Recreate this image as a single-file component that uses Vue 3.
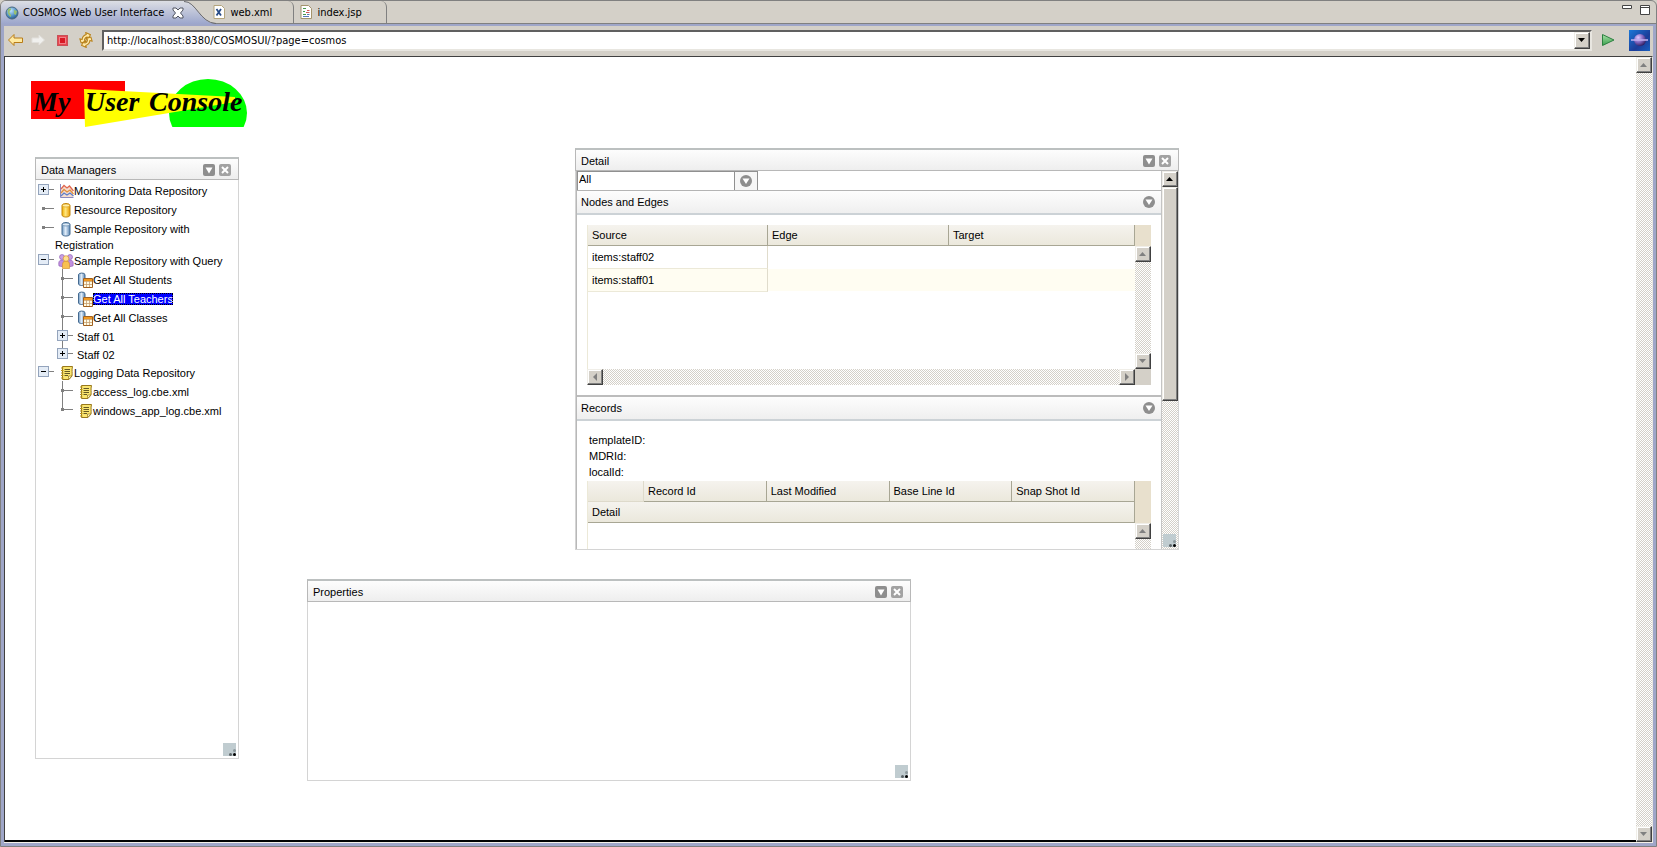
<script setup>
import { ref } from 'vue'

const url = ref('http://localhost:8380/COSMOSUI/?page=cosmos')
const filter = ref('All')
const selected = ref('Get All Teachers')

const tree = [
  { label: 'Monitoring Data Repository', icon: 'chart', state: 'plus' },
  { label: 'Resource Repository', icon: 'cyl-gold' },
  { label: 'Sample Repository with Registration', icon: 'cyl-blue' },
  {
    label: 'Sample Repository with Query',
    icon: 'people',
    state: 'minus',
    children: [
      { label: 'Get All Students', icon: 'query' },
      { label: 'Get All Teachers', icon: 'query' },
      { label: 'Get All Classes', icon: 'query' },
      { label: 'Staff 01', state: 'plus' },
      { label: 'Staff 02', state: 'plus' },
    ],
  },
  {
    label: 'Logging Data Repository',
    icon: 'log',
    state: 'minus',
    children: [
      { label: 'access_log.cbe.xml', icon: 'log' },
      { label: 'windows_app_log.cbe.xml', icon: 'log' },
    ],
  },
]
const edges = ['items:staff02', 'items:staff01']
</script>

<template>
  <div class="frame">
    <svg class="defs" aria-hidden="true">
      <defs>
        <linearGradient id="gold" x1="0" x2="1"><stop offset="0" stop-color="#f0b000" /><stop offset=".45" stop-color="#ffe680" /><stop offset="1" stop-color="#e89c00" /></linearGradient>
        <linearGradient id="steel" x1="0" x2="1"><stop offset="0" stop-color="#6f98c0" /><stop offset=".45" stop-color="#e2eefa" /><stop offset="1" stop-color="#5a86b4" /></linearGradient>
        <linearGradient id="tabfill" x1="0" y1="0" x2="0" y2="1"><stop offset="0" stop-color="#dcdee4" /><stop offset="1" stop-color="#9ca6cc" /></linearGradient>
        <linearGradient id="go" x1="0" y1="0" x2="0" y2="1"><stop offset="0" stop-color="#a8e0a8" /><stop offset="1" stop-color="#3aa04c" /></linearGradient>
        <linearGradient id="sky" x1="0" y1="0" x2="1" y2="1"><stop offset="0" stop-color="#1c78d8" /><stop offset=".6" stop-color="#1c3c98" /><stop offset="1" stop-color="#1860c0" /></linearGradient>
        <radialGradient id="orb" cx=".35" cy=".3" r=".8"><stop offset="0" stop-color="#e0c8ff" /><stop offset=".5" stop-color="#8066c0" /><stop offset="1" stop-color="#20104c" /></radialGradient>
        <radialGradient id="world" cx=".4" cy=".3" r=".8"><stop offset="0" stop-color="#bfe4ff" /><stop offset=".6" stop-color="#4c8cc0" /><stop offset="1" stop-color="#204878" /></radialGradient>
      </defs>
      <symbol id="chart" viewBox="0 0 16 16">
        <path d="M2.500 1V14.500H15.500" fill="none" stroke="#8a8ac0" />
        <path d="M3 6 6 3 9 5 11 3 15 8V14H3z" fill="#f4dcd0" />
        <path d="M3 6 6 2.500 9 5 11.500 3 15.500 8" fill="none" stroke="#e06850" stroke-width="1.300" />
        <path d="M3 10 6 6.500 9 9 12 7 15.500 11" fill="none" stroke="#e09040" stroke-width="1.300" />
        <path d="M3 13 6 10 9 12 12 10 15.500 13" fill="none" stroke="#6080c8" stroke-width="1.300" />
      </symbol>
      <symbol id="cyl-gold" viewBox="0 0 16 16"><path d="M4 3.500C4 .8 12 .8 12 3.500V13C12 15.700 4 15.700 4 13z" fill="url(#gold)" stroke="#c08410" /><ellipse cx="8" cy="3.500" rx="3.500" ry="1.500" fill="#fff0a8" stroke="#d89c20" stroke-width=".7" /></symbol>
      <symbol id="cyl-blue" viewBox="0 0 16 16"><path d="M4 3.500C4 .8 12 .8 12 3.500V13C12 15.700 4 15.700 4 13z" fill="url(#steel)" stroke="#446a90" /><ellipse cx="8" cy="3.500" rx="3.500" ry="1.500" fill="#dceaf6" stroke="#5a80a4" stroke-width=".7" /></symbol>
      <symbol id="people" viewBox="0 0 16 16">
        <path d="M1 13C0 8 2 7 4 7S7 9 6 14zM15 13C16 8 14 7 12 7S9 9 10 14z" fill="#c090e0" stroke="#8c58b0" stroke-width=".6" />
        <circle cx="4" cy="4" r="2.500" fill="#c8a0e4" stroke="#8c58b0" stroke-width=".6" /><circle cx="12" cy="4" r="2.500" fill="#c8a0e4" stroke="#8c58b0" stroke-width=".6" />
        <path d="M4.500 15.500C4 9 5.500 8 8 8S12 9 11.500 15.500z" fill="#f8c050" stroke="#d08820" stroke-width=".6" /><circle cx="8" cy="5.500" r="2.800" fill="#ffe090" stroke="#d08820" stroke-width=".6" />
      </symbol>
      <symbol id="query" viewBox="0 0 16 16">
        <path d="M1.500 2.500C2 .6 7.500 .6 8 2.500V12C7 14 2 14 1.500 12z" fill="url(#steel)" stroke="#446a90" />
        <path d="M6.500 6.500H15.500V15.500H6.500z" fill="#fffbe4" stroke="#a06020" /><path d="M7 7H15V9H7z" fill="#f09820" />
        <path d="M7 9.500H15M7 12.500H15M9.500 9V15M12.500 9V15" stroke="#c8a070" stroke-width=".8" />
      </symbol>
      <symbol id="log" viewBox="0 0 16 16">
        <path d="M4.500 1.500H14.500C13.500 5 14.500 8 14 11L11 14.500H4.500z" fill="#fbe670" stroke="#98781c" />
        <path d="M6.500 4.500H12M6.500 6.500H12M6.500 8.500H12M6.500 10.500H10" stroke="#54481c" stroke-width=".9" />
        <path d="M3 3H5.500M3 5.500H5.500M3 8H5.500M3 10.500H5.500M3 13H5.500" stroke="#b8941c" stroke-width="1.200" /><path d="M10.500 14.500V11H14z" fill="#fff7bc" stroke="#98781c" stroke-width=".7" />
      </symbol>
      <symbol id="menu" viewBox="0 0 12 12"><rect width="12" height="12" rx="2" fill="#8e8e8e" /><path d="M2.500 3.500H9.500L6 9.500z" fill="#fff" /></symbol>
      <symbol id="close" viewBox="0 0 12 12"><rect width="12" height="12" rx="2" fill="#a2a2a2" /><path d="M3 3 9 9M9 3 3 9" stroke="#fff" stroke-width="2" /></symbol>
      <symbol id="round" viewBox="0 0 12 12"><circle cx="6" cy="6" r="6" fill="#8e8e8e" /><path d="M2.500 3.500H9.500L6 9z" fill="#fff" /></symbol>
      <symbol id="up" viewBox="0 0 8 8"><path d="M0 6H7L3.500 2z" fill="currentColor" /></symbol>
      <symbol id="down" viewBox="0 0 8 8"><path d="M0 2H7L3.500 6z" fill="currentColor" /></symbol>
      <symbol id="left" viewBox="0 0 8 8"><path d="M6 0V8L2 4z" fill="currentColor" /></symbol>
      <symbol id="right" viewBox="0 0 8 8"><path d="M2 0V8L6 4z" fill="currentColor" /></symbol>
      <symbol id="grip" viewBox="0 0 13 13"><rect width="13" height="13" fill="#c0ccd0" /><circle cx="11.500" cy="7.500" r="1.500" fill="#8c989c" /><circle cx="7.500" cy="11.500" r="1.500" fill="#5c6468" /><circle cx="11.500" cy="11.500" r="1.500" fill="#000" /></symbol>
    </svg>

    <header class="tabs">
      <button class="tab active">
        <svg class="i14" viewBox="0 0 14 14"><circle cx="7" cy="7" r="6" fill="url(#world)" stroke="#486880" /><path d="M3 3C6 1 7 3 5 5S7 8 6 11C4 10 2 7 3 3zM9 4 12 5 11 9 9 8z" fill="#98c070" /></svg>
        <span>COSMOS Web User Interface</span>
        <svg class="i12" viewBox="0 0 12 12"><path d="M1 1H4L6 3 8 1H11V3L8.500 6 11 9V11H8L6 9 4 11H1V9L3.500 6 1 3z" fill="#fff" stroke="#505460" /></svg>
      </button>
      <svg class="curve" viewBox="0 0 32 23"><path d="M0 0C12 0 16 22 32 23H0z" fill="url(#tabfill)" /><path d="M0 .5C12 0 16 22 32 22.500" fill="none" stroke="#68686c" /></svg>
      <button class="tab second">
        <svg class="i14" viewBox="0 0 14 14"><path d="M2 .5H9.500L12.500 3.500V13.500H2z" fill="#fff" stroke="#b4a47c" /><path d="M4.500 4 9 10.500M9 4 4.500 10.500" stroke="#284c88" stroke-width="1.800" /></svg>
        <span>web.xml</span>
      </button>
      <button class="tab third">
        <svg class="i14" viewBox="0 0 14 14"><path d="M2 .5H9.500L12.500 3.500V13.500H2z" fill="#fff" stroke="#a4946c" /><path d="M4 3.500H7M4 6.500H6M4 9.500H7" stroke="#48984c" /><path d="M8 5.500H10.500M7 7.500H10.500" stroke="#d05858" /><path d="M8 9.500H10.500M4 11.500H10" stroke="#5878b8" /></svg>
        <span>index.jsp</span>
      </button>
      <div class="winbuttons">
        <button aria-label="Minimize"><svg width="10" height="12"><path d="M.5 2.500H9.500V5.500H.5z" fill="#fff" stroke="#444" /></svg></button>
        <button aria-label="Maximize"><svg width="10" height="12"><path d="M.5 2.500H9.500V11.500H.5zM.5 4.500H9.500" fill="#fff" stroke="#444" /></svg></button>
      </div>
    </header>

    <div class="view">
      <nav class="toolbar">
        <button aria-label="Back"><svg class="i16" viewBox="0 0 16 16"><path d="M1.500 8 7 2.500V6H15.500V10.500H7V13.500z" fill="#ffe9a0" stroke="#b87c18" stroke-linejoin="round" /></svg></button>
        <button aria-label="Forward" disabled><svg class="i16" viewBox="0 0 16 16"><path d="M14.500 8 9 3V6H2V10.500H9V13z" fill="#f0f0ee" stroke="#e2e0dc" /></svg></button>
        <button aria-label="Stop"><svg class="i16" viewBox="0 0 16 16"><rect x="3.500" y="3.500" width="10" height="10" fill="#e84850" stroke="#c85058" /><rect x="5.500" y="5.500" width="6" height="6" fill="#d81824" stroke="#f08088" /></svg></button>
        <button aria-label="Refresh"><svg class="i16" viewBox="0 0 16 16"><path d="M1.500 9.500V5L3.500 6.500C4.500 4 6.500 3 9 3V1L13 4.500 9 7.500V5.500C7 5.500 6 6.500 5.500 8L7 9.500z" fill="#ffe9a8" stroke="#b88018" stroke-linejoin="round" transform="rotate(-18 7 5)" /><path d="M14.500 6.500V11L12.500 9.500C11.500 12 9.500 13 7 13V15L3 11.500 7 8.500V10.500C9 10.500 10 9.500 10.500 8L9 6.500z" fill="#ffe9a8" stroke="#b88018" stroke-linejoin="round" transform="rotate(-18 9 11)" /></svg></button>
        <div class="address">
          <input v-model="url" aria-label="Address" />
          <button class="bevel" aria-label="Show history"><svg class="i8 dark"><use href="#down" /></svg></button>
        </div>
        <button class="go" aria-label="Go"><svg class="i16" viewBox="0 0 16 16"><path d="M2.500 2.500 14 8 2.500 13.500z" fill="url(#go)" stroke="#2c8040" /></svg></button>
        <svg class="brand" viewBox="0 0 21 21"><rect width="21" height="21" fill="url(#sky)" /><circle cx="11" cy="10" r="6" fill="url(#orb)" /><path d="M2 10H19" stroke="#c0b0f0" stroke-width="1.500" /></svg>
      </nav>

      <main class="page">
        <div class="canvas">
          <svg class="logo" viewBox="0 0 218 49" role="img" aria-label="My User Console">
            <rect x="0" y="3" width="94" height="38" fill="#f00" />
            <ellipse cx="177" cy="35" rx="39" ry="34" fill="#0f0" />
            <path d="M53 11 204 19 204 24 54 49z" fill="#ff0" />
            <text x="2" y="33">My</text><text x="54" y="33">User</text><text x="118" y="33">Console</text>
          </svg>

          <section class="window managers">
            <header class="title"><h2>Data Managers</h2>
              <button aria-label="Menu"><svg class="i12"><use href="#menu" /></svg></button>
              <button aria-label="Close"><svg class="i12"><use href="#close" /></svg></button>
            </header>
            <ul class="tree">
              <li v-for="n in tree" :key="n.label">
                <div class="node">
                  <button v-if="n.state" class="expander" :class="n.state" :aria-label="'Toggle ' + n.label"></button>
                  <i v-else class="leaf"></i>
                  <div class="label"><svg class="i16 pic"><use :href="'#' + n.icon" /></svg><span>{{ n.label }}</span></div>
                </div>
                <ul v-if="n.children">
                  <li v-for="c in n.children" :key="c.label" class="child">
                    <div class="node" :class="{ plain: !c.icon }">
                      <button v-if="c.state" class="expander" :class="c.state" :aria-label="'Toggle ' + c.label"></button>
                      <i v-else class="leaf"></i>
                      <div class="label"><svg v-if="c.icon" class="i16 pic"><use :href="'#' + c.icon" /></svg><span :class="{ selected: c.label === selected }" @click="selected = c.label">{{ c.label }}</span></div>
                    </div>
                  </li>
                </ul>
              </li>
            </ul>
            <svg class="grip"><use href="#grip" /></svg>
          </section>

          <section class="window detail">
            <header class="title"><h2>Detail</h2>
              <button aria-label="Menu"><svg class="i12"><use href="#menu" /></svg></button>
              <button aria-label="Close"><svg class="i12"><use href="#close" /></svg></button>
            </header>
            <div class="scroller">
              <div class="content">
                <div class="combo">
                  <input v-model="filter" aria-label="Filter" />
                  <button aria-label="Open filter list"><svg class="i12"><use href="#round" /></svg></button>
                </div>
                <header class="section"><h3>Nodes and Edges</h3><button aria-label="Collapse"><svg class="i12"><use href="#round" /></svg></button></header>
                <div class="panel">
                  <div class="grid edges">
                    <table>
                      <colgroup><col class="c180" /><col class="c181" /><col /></colgroup>
                      <thead><tr><th>Source</th><th>Edge</th><th>Target</th></tr></thead>
                      <tbody><tr v-for="e in edges" :key="e"><td>{{ e }}</td><td></td><td></td></tr></tbody>
                    </table>
                    <div class="side">
                      <div class="corner"></div>
                      <div class="vbar"><button class="bevel" aria-label="Scroll up"><svg class="i8"><use href="#up" /></svg></button><button class="bevel" aria-label="Scroll down"><svg class="i8"><use href="#down" /></svg></button></div>
                    </div>
                  </div>
                  <div class="hrow">
                    <div class="hbar"><button class="bevel" aria-label="Scroll left"><svg class="i8"><use href="#left" /></svg></button><button class="bevel" aria-label="Scroll right"><svg class="i8"><use href="#right" /></svg></button></div>
                    <div class="square"></div>
                  </div>
                </div>
                <header class="section heavy"><h3>Records</h3><button aria-label="Collapse"><svg class="i12"><use href="#round" /></svg></button></header>
                <div class="panel">
                  <dl class="facts"><dt>templateID:</dt><dt>MDRId:</dt><dt>localId:</dt></dl>
                  <div class="grid records">
                    <table>
                      <colgroup><col class="c56" /><col /><col /><col /><col /></colgroup>
                      <thead>
                        <tr><th class="blank"></th><th>Record Id</th><th>Last Modified</th><th>Base Line Id</th><th>Snap Shot Id</th></tr>
                        <tr><th colspan="5">Detail</th></tr>
                      </thead>
                    </table>
                    <div class="side">
                      <div class="corner tall"></div>
                      <div class="vbar"><button class="bevel" aria-label="Scroll up"><svg class="i8"><use href="#up" /></svg></button></div>
                    </div>
                  </div>
                </div>
              </div>
              <div class="vbar outer"><button class="bevel" aria-label="Scroll up"><svg class="i8 dark"><use href="#up" /></svg></button><div class="bevel thumb"></div></div>
            </div>
            <svg class="grip"><use href="#grip" /></svg>
          </section>

          <section class="window properties">
            <header class="title"><h2>Properties</h2>
              <button aria-label="Menu"><svg class="i12"><use href="#menu" /></svg></button>
              <button aria-label="Close"><svg class="i12"><use href="#close" /></svg></button>
            </header>
            <svg class="grip"><use href="#grip" /></svg>
          </section>
        </div>
        <div class="vbar"><button class="bevel" aria-label="Scroll up"><svg class="i8"><use href="#up" /></svg></button><button class="bevel" aria-label="Scroll down"><svg class="i8"><use href="#down" /></svg></button></div>
      </main>
    </div>
  </div>
</template>

<style>
body { background: #d4d0c8; }
</style>

<style scoped>
* { box-sizing: border-box; }
.frame { display: flex; flex-direction: column; min-height: 100vh; background: #d4d0c8; color: #000; font: 11px/15px "DejaVu Sans Condensed", "Noto Sans", sans-serif; border: 1px solid #808080; border-radius: 6px 6px 0 0; overflow: hidden; }
.defs { position: absolute; width: 0; height: 0; }
button { border: 0; padding: 0; margin: 0; background: none; font: inherit; color: inherit; display: flex; align-items: center; justify-content: center; }
input { border: 0; padding: 0; margin: 0; font: inherit; color: inherit; min-width: 0; background: none; outline: 0; }
ul, dl, dt, h2, h3 { margin: 0; padding: 0; list-style: none; font: inherit; }
svg { flex: none; display: block; }
.i8 { width: 8px; height: 8px; color: #808080; }
.i8.dark { color: #000; }
.i12 { width: 12px; height: 12px; }
.i14 { width: 14px; height: 14px; }
.i16 { width: 16px; height: 16px; }

.tabs { display: flex; height: 23px; border-bottom: 1px solid #808080; }
.tab { height: 22px; white-space: nowrap; justify-content: flex-start; }
.active { height: 23px; padding-left: 4px; gap: 4px; background: linear-gradient(#dcdee4, #9ca6cc); }
.active .i12 { margin-left: 4px; }
.curve { width: 32px; height: 23px; margin-right: -4px; }
.second, .third { gap: 4px; border-right: 1px solid #808080; border-top-right-radius: 6px; }
.second { width: 82px; }
.third { width: 93px; padding-left: 5px; }
.winbuttons { margin-left: auto; display: flex; gap: 8px; padding: 2px 6px 0 0; align-items: flex-start; }

.view { flex: 1; display: flex; flex-direction: column; padding: 2px 3px 4px; background: #9fa6c8; }
.toolbar { display: flex; align-items: center; height: 30px; padding: 0 3px 2px 3px; gap: 8px; background: #d4d0c8; }
.toolbar > button:first-child { margin-right: -1px; }
.address { flex: 1; display: flex; height: 21px; background: #fff; border: 2px solid; border-color: #606060 #e8e6e0 #e8e6e0 #606060; }
.address input { flex: 1; padding-left: 3px; }
.address .bevel { height: 17px; }
.go { margin: 0 5px 0 0; }
.brand { width: 21px; height: 21px; }

.page { flex: 1; display: flex; background: #fff; border-left: 1px solid #404040; border-top: 1px solid #404040; border-right: 1px solid #e8e6e0; box-shadow: 0 1px #f4efe8; }
.canvas { flex: 1; position: relative; min-height: 783px; border-bottom: 2px solid #000; font: 11px/15px "Liberation Sans", Arial, sans-serif; }
.logo { width: 218px; height: 49px; margin: 21px 0 0 26px; }
.logo text { font: italic bold 28px "Liberation Serif", serif; }

.bevel { width: 16px; height: 16px; flex: none; background: #d4d0c8; border: 1px solid; border-color: #f0eee8 #404040 #404040 #f0eee8; box-shadow: inset -1px -1px #808080, inset 1px 1px #fff; }
.vbar, .hbar { background: repeating-conic-gradient(#fff 0 25%, #d4d0c8 0 50%) 0 0 / 2px 2px; display: flex; justify-content: space-between; }
.vbar { width: 16px; flex-direction: column; }
.hbar { flex: 1; height: 16px; }

.window { position: absolute; display: flex; flex-direction: column; border: 1px solid #d4d4d4; background: #fff; }
.managers { left: 30px; top: 101px; width: 204px; height: 601px; }
.detail { left: 570px; top: 92px; width: 604px; height: 401px; }
.properties { left: 302px; top: 523px; width: 604px; height: 201px; }
.title { display: flex; align-items: center; gap: 4px; height: 23px; flex: none; margin: -1px -1px 0; padding: 1px 7px 0 5px; border: 1px solid #b8b8b8; border-top: 2px solid #bcc0c0; background: linear-gradient(#fdfdfd, #eee); }
.window .title { margin-top: -2px; padding-top: 2px; }
.title h2, .section h3 { flex: 1; }
.grip { position: absolute; right: 2px; bottom: 2px; width: 13px; height: 13px; }

.tree { padding-top: 2px; }
.node { position: relative; min-height: 19px; padding-left: 19px; }
.expander { position: absolute; left: 2px; top: 2px; width: 11px; height: 11px; border: 1px solid #94a4bc; background: linear-gradient(#000, #000) center / 5px 1px no-repeat, #e4ecf6; }
.expander.plus { background: linear-gradient(#000, #000) center / 5px 1px no-repeat, linear-gradient(#000, #000) center / 1px 5px no-repeat, #e4ecf6; }
.expander::after { content: ""; position: absolute; left: 10px; top: 4px; width: 5px; height: 1px; background: #808080; }
.leaf { position: absolute; left: 6px; top: 6px; width: 12px; height: 3px; background: linear-gradient(#808080, #808080) 0 0 / 3px 3px no-repeat, linear-gradient(#808080, #808080) 0 1px / 12px 1px no-repeat; }
.label { line-height: 14px; padding-right: 6px; }
.pic { display: inline-block; margin: 1px 0 1px 3px; vertical-align: -5px; }
.child { position: relative; padding-left: 19px; }
.child::before { content: ""; position: absolute; left: 26px; top: -2px; bottom: 2px; width: 1px; background: #808080; }
.child:last-child::before { bottom: 11px; }
.plain { min-height: 18px; }
.plain .label { padding-left: 3px; line-height: 18px; }
.selected { background: #00f; color: #fff; outline: 1px dotted #000; outline-offset: -1px; }

.scroller { flex: 1; display: flex; min-height: 0; overflow: hidden; border-left: 1px solid #b8b8b8; }
.content { flex: 1; min-width: 0; overflow: hidden; border-right: 1px solid #c4c4c4; }
.outer { justify-content: flex-start; }
.thumb { height: 214px; }
.combo { display: flex; width: 181px; height: 19px; border: 1px solid #909090; border-bottom: 0; }
.combo input { flex: 1; height: 15px; padding-left: 1px; }
.combo button { width: 23px; border-left: 1px solid #909090; background: #f6f6f6; }
.section { display: flex; align-items: center; height: 25px; padding: 0 6px 0 4px; border-top: 1px solid #b4b4b4; border-bottom: 2px solid #ccd2d6; background: linear-gradient(#fdfdfd, #efefef); }
.section.heavy { height: 26px; border-top: 2px solid #bcbcbc; }
.panel { padding: 10px; }
.grid { display: flex; border-left: 1px solid #ece9d8; }
.edges { height: 144px; }
.records { height: 100px; }
table { flex: 1; width: 0; min-width: 0; align-self: flex-start; table-layout: fixed; border-collapse: separate; border-spacing: 0; }
.c180 { width: 180px; }
.c181 { width: 181px; }
.c56 { width: 56px; }
th, td { height: 23px; padding: 0 4px; text-align: left; font-weight: normal; }
th { height: 21px; background: linear-gradient(#f5f3ee, #ebe8dc); border-right: 1px solid #a8a694; border-bottom: 1px solid #a8a694; }
.blank { border-color: #dedacb; }
.edges td { border-bottom: 1px solid #fff; }
.edges td:first-child { border-right: 1px solid #e0dccc; border-bottom: 1px solid #ece9d8; }
.edges tr:nth-child(2) td { background: #fffdf2; }
.side { display: flex; flex-direction: column; }
.side .vbar { flex: 1; }
.corner { height: 21px; background: #e8e0cd; }
.corner.tall { height: 42px; }
.hrow { display: flex; }
.square { width: 16px; height: 16px; background: #d4d0c8; }
.facts { padding: 1px 2px 1px; }
.facts dt { height: 16px; line-height: 16px; }
</style>
